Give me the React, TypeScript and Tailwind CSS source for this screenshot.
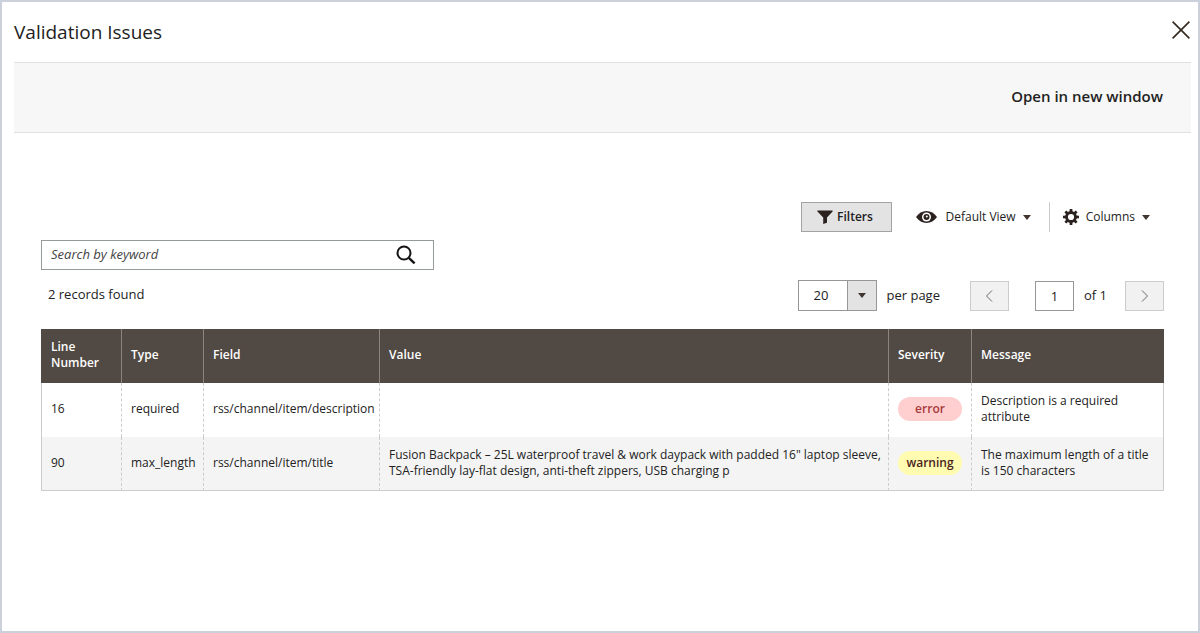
import React, { useState } from 'react';

interface Issue {
    line: number;
    type: string;
    field: string;
    value: string;
    severity: 'error' | 'warning';
    message: string;
}

const issues: Issue[] = [
    {
        line: 16,
        type: 'required',
        field: 'rss/channel/item/description',
        value: '',
        severity: 'error',
        message: 'Description is a required attribute',
    },
    {
        line: 90,
        type: 'max_length',
        field: 'rss/channel/item/title',
        value: 'Fusion Backpack – 25L waterproof travel & work daypack with padded 16" laptop sleeve, TSA-friendly lay-flat design, anti-theft zippers, USB charging p',
        severity: 'warning',
        message: 'The maximum length of a title is 150 characters',
    },
];

const columns = [
    { label: 'Line Number', width: 'w-20' },
    { label: 'Type', width: 'w-[82px]' },
    { label: 'Field', width: 'w-44' },
    { label: 'Value', width: '' },
    { label: 'Severity', width: 'w-[83px]' },
    { label: 'Message', width: 'w-[193px]' },
];

const severityStyles = {
    error: 'bg-[#ffcfd0] text-[#a63a3c]',
    warning: 'bg-[#fffbb0] text-[#4a1f1c]',
};

const cell = 'border-l border-dashed border-[#ccc] pl-[9px] pb-0.5';

// -- Icons --

const CloseIcon = () => (
    <svg className="w-5 h-5" viewBox="0 0 20 20" fill="none" stroke="#33291f" strokeWidth="1.6">
        <path d="M1.6 1.6 18.4 18.4M18.4 1.6 1.6 18.4" />
    </svg>
);

const FunnelIcon = () => (
    <svg className="w-4 h-4" viewBox="0 0 16 16" fill="#2b2220">
        <path d="M.4 1.4h15.2v1.2L10 8.4v5.3L6.2 15V8.4L.4 2.6z" />
    </svg>
);

const EyeIcon = () => (
    <svg className="w-[21px] h-3" viewBox="0 0 21 12">
        <path d="M0 6C2.700 2.200 6.300 0 10.500 0S18.300 2.200 21 6c-2.700 3.800-6.300 6-10.500 6S2.700 9.800 0 6z" fill="#2b2220" />
        <circle cx="10.5" cy="6" r="4.5" fill="#fff" />
        <circle cx="10.5" cy="6" r="3" fill="#2b2220" />
        <circle cx="10.8" cy="5.4" r="1" fill="#fff" />
    </svg>
);

const GearIcon = () => (
    <svg className="w-4 h-4" viewBox="0 0 16 16">
        <circle cx="8" cy="8" r="4.5" fill="none" stroke="#2b2220" strokeWidth="2.8" />
        <g fill="#2b2220">
            {[0, 45, 90, 135, 180, 225, 270, 315].map((angle) => (
                <path key={angle} d="M6.500 3 6.700 0h2.600l.2 3z" transform={`rotate(${angle} 8 8)`} />
            ))}
        </g>
    </svg>
);

const SearchIcon = () => (
    <svg className="w-5 h-5" viewBox="0 0 20 20" fill="none" stroke="#161414">
        <circle cx="8" cy="8" r="6.5" strokeWidth="2" />
        <path d="m12.8 12.8 5.8 5.6" strokeWidth="2.4" />
    </svg>
);

const Caret = () => (
    <svg className="w-2 h-[5px]" viewBox="0 0 8 5" fill="#41362f">
        <path d="M0 0h8L4 5z" />
    </svg>
);

const Chevron = ({ d }: { d: string }) => (
    <svg className="w-2 h-3" viewBox="0 0 8 12" fill="none" stroke="#6d6864" strokeWidth="1">
        <path d={d} />
    </svg>
);

export default function App() {
    const [keyword, setKeyword] = useState('');
    const [perPage, setPerPage] = useState('20');
    const [page, setPage] = useState('1');

    return (
        <div className="min-h-screen border-2 border-[#cbd1da] bg-white font-['Open_Sans',sans-serif] text-[#222]">
            <header className="flex h-15 items-center justify-between pl-3 pr-[7px]">
                <h1 className="text-[19px] leading-6">Validation Issues</h1>
                <button aria-label="Close" className="pb-1">
                    <CloseIcon />
                </button>
            </header>

            <div className="ml-3 mr-[7px] flex h-[71px] items-center justify-end border-y border-[#e0e0e0] bg-[#f7f7f7] pr-7">
                <button className="pb-0.5 text-[15px] font-semibold">Open in new window</button>
            </div>

            <main className="pl-[39px] pr-[34px] pt-[69px] text-[13px]">
                {/* Grid controls */}
                <div className="flex items-center justify-end pr-[14px] text-[12px]">
                    <button className="flex h-[30px] w-[91px] items-center justify-center gap-1 border border-[#a3a3a3] bg-[#e3e3e3] pr-1 font-semibold">
                        <FunnelIcon />
                        Filters
                    </button>
                    <button className="ml-6 flex items-center gap-2">
                        <EyeIcon />
                        <span className="flex items-center gap-[7px]">
                            Default View
                            <Caret />
                        </span>
                    </button>
                    <button className="ml-[18px] flex h-[30px] items-center gap-[7px] border-l border-[#ccc] pl-[13px]">
                        <GearIcon />
                        Columns
                        <Caret />
                    </button>
                </div>

                <div className="mt-2 flex h-[30px] w-[393px] items-center border border-[#959b9b] pr-[17px]">
                    <input
                        aria-label="Search by keyword"
                        value={keyword}
                        onChange={(e) => setKeyword(e.target.value)}
                        placeholder="Search by keyword"
                        className="min-w-0 flex-1 pl-[9px] outline-none placeholder:italic placeholder:text-[#444]"
                    />
                    <button aria-label="Search">
                        <SearchIcon />
                    </button>
                </div>

                <div className="mt-[10px] flex items-center justify-between">
                    <p className="pb-0.5 pl-[7px]">2 records found</p>
                    <div className="flex items-center">
                        <div className="relative">
                            <select
                                id="per-page"
                                value={perPage}
                                onChange={(e) => setPerPage(e.target.value)}
                                className="h-[31px] w-[79px] appearance-none border border-[#979797] bg-white pl-[15px]"
                            >
                                <option>20</option>
                                <option>50</option>
                                <option>100</option>
                            </select>
                            <span className="pointer-events-none absolute inset-y-0 right-0 flex w-[30px] items-center justify-center border border-[#979797] bg-[#e3e3e3]">
                                <Caret />
                            </span>
                        </div>
                        <label htmlFor="per-page" className="ml-[10px]">per page</label>
                        <button aria-label="Previous page" className="ml-[30px] flex h-[30px] w-[39px] items-center justify-center border border-[#ccc] bg-[#f1f1f1]">
                            <Chevron d="M7 .5 1.5 6 7 11.5" />
                        </button>
                        <input
                            id="page"
                            value={page}
                            onChange={(e) => setPage(e.target.value)}
                            className="ml-[26px] h-[30px] w-[39px] border border-[#979797] text-center outline-none"
                        />
                        <label htmlFor="page" className="ml-[10px]">of 1</label>
                        <button aria-label="Next page" className="ml-[18px] flex h-[30px] w-[39px] items-center justify-center border border-[#ccc] bg-[#f1f1f1]">
                            <Chevron d="m1 .5 5.5 5.5L1 11.5" />
                        </button>
                    </div>
                </div>

                <table className="mt-[18px] w-full table-fixed border-separate border-spacing-0 text-left text-[12px] leading-4">
                    <thead>
                        <tr className="h-[54px] bg-[#514943] text-white">
                            {columns.map((column) => (
                                <th
                                    key={column.label}
                                    className={`${column.width} border-l border-[#8a837f] px-[9px] pb-0.5 font-semibold first:border-[#514943]`}
                                >
                                    {column.label}
                                </th>
                            ))}
                        </tr>
                    </thead>
                    <tbody className="[&>tr:last-child>td]:[border-bottom:1px_solid_#ccc]">
                        {issues.map((issue) => (
                            <tr key={issue.line} className="h-[54px] even:bg-[#f4f4f4]">
                                <td className="border-l border-[#ccc] pb-0.5 pl-[9px]">{issue.line}</td>
                                <td className={cell}>{issue.type}</td>
                                <td className={`${cell} whitespace-nowrap`}>{issue.field}</td>
                                <td className={`${cell} pr-1`}>{issue.value}</td>
                                <td className={`${cell} pr-[9px]`}>
                                    <span className={`flex h-6 items-center justify-center rounded-full font-semibold ${severityStyles[issue.severity]}`}>
                                        {issue.severity}
                                    </span>
                                </td>
                                <td className={`${cell} pr-[9px] [border-right:1px_solid_#ccc]`}>{issue.message}</td>
                            </tr>
                        ))}
                    </tbody>
                </table>
            </main>
        </div>
    );
}
